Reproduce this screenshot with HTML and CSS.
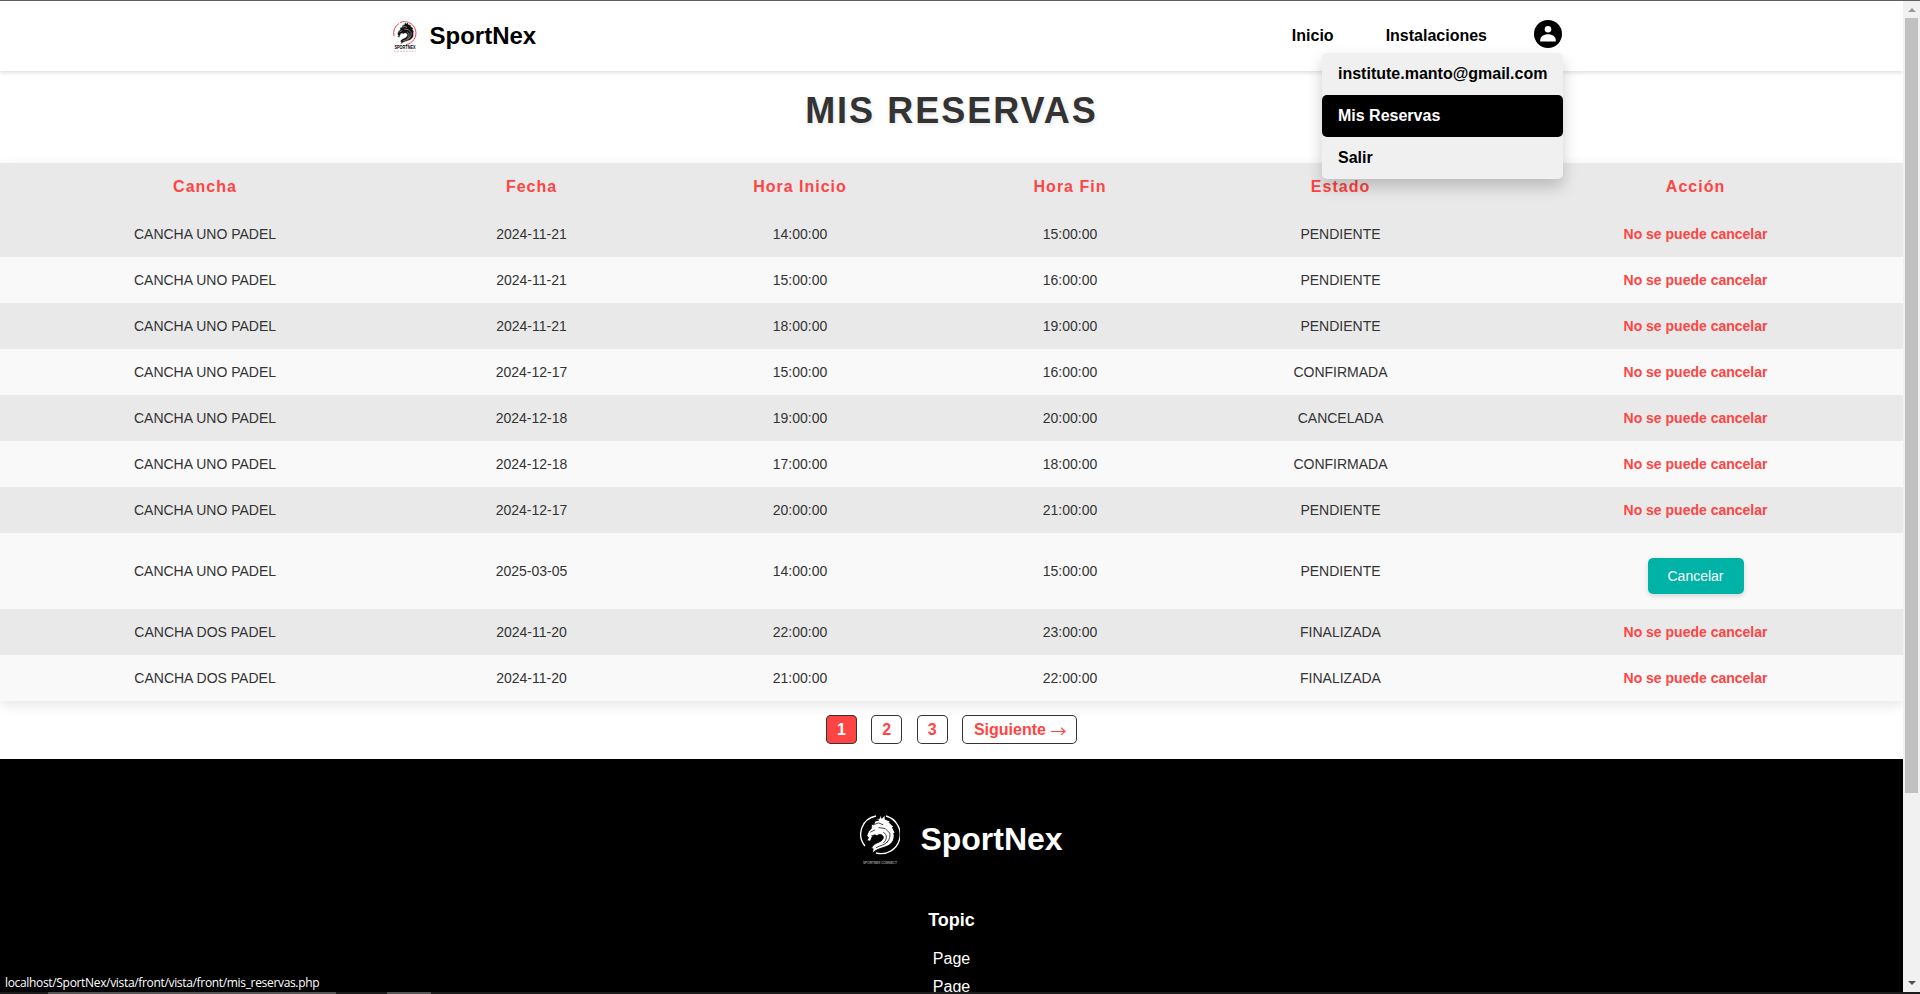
FILE: index.html
```html
<!DOCTYPE html>
<html lang="es">
<head>
<meta charset="utf-8">
<title>SportNex - Mis Reservas</title>
<link rel="stylesheet" href="styles.css">
</head>
<body>
<svg class="defs" width="0" height="0" aria-hidden="true">
  <symbol id="dragon" viewBox="0 0 38 42">
    <path d="M19 0 20.500 4 24 .5 24 5l5.500 2-1 1.500L33 13l-1 1 3 6-1.500 0C35 28 31 33 24 35c-6 2-10 3-14 7l1-5-2 0c1-4 5-6 9-7.500 4-2 5-5 3-7-2-1.500-4-1-6 .5l-2-1-3 2-2 5-4-1 2-3-2-2 2-5 3-3 0-4 3-1 1-3 4-1-4-1 5-1z"/>
    <path class="cut" d="M8 19l5-2.500M11 11l6-2 5 2M17 14l7 1 5 5M22 19c5 3 4 8 0 12M29 20c1 5-1 8-4 11M14 36c5-3 10-3 13-7M9 23l4-1"/>
  </symbol>
</svg>
<div class="window">
  <div class="page">
    <header class="header">
      <div class="brand">
        <svg class="brand-logo" viewBox="0 0 26 34">
          <path class="ring" d="M8 3.500A11.500 11.500 0 1 1 14 25.500M7 4.500A12 12 0 0 0 2 17"/>
          <use class="brand-dragon" href="#dragon" x="3" y="1" width="21" height="26"/>
          <text x="2.500" y="30.300" textLength="21" lengthAdjust="spacingAndGlyphs">SPORTNEX</text>
          <path class="tagline" d="M2 32.200H24"/>
        </svg>
        <span>SportNex</span>
      </div>
      <nav class="nav">
        <a>Inicio</a>
        <a>Instalaciones</a>
        <div class="user">
          <svg class="avatar" viewBox="0 0 28 28">
            <circle cx="14" cy="14" r="14"/>
            <circle class="face" cx="14" cy="9.300" r="3.300"/>
            <path class="face" d="M6.200 21.500v-1c0-4 3.500-6.200 7.800-6.200s7.800 2.200 7.800 6.200v1z"/>
          </svg>
          <div class="menu">
            <a>institute.manto@gmail.com</a>
            <a class="active">Mis Reservas</a>
            <a>Salir</a>
          </div>
        </div>
      </nav>
    </header>
    <h1 class="title">MIS RESERVAS</h1>
    <table class="bookings">
      <colgroup><col class="c1"><col class="c2"><col class="c3"><col class="c4"><col class="c5"><col class="c6"></colgroup>
      <thead><tr><th>Cancha</th><th>Fecha</th><th>Hora Inicio</th><th>Hora Fin</th><th>Estado</th><th>Acción</th></tr></thead>
      <tbody>
        <tr><td>CANCHA UNO PADEL</td><td>2024-11-21</td><td>14:00:00</td><td>15:00:00</td><td>PENDIENTE</td><td class="locked">No se puede cancelar</td></tr>
        <tr><td>CANCHA UNO PADEL</td><td>2024-11-21</td><td>15:00:00</td><td>16:00:00</td><td>PENDIENTE</td><td class="locked">No se puede cancelar</td></tr>
        <tr><td>CANCHA UNO PADEL</td><td>2024-11-21</td><td>18:00:00</td><td>19:00:00</td><td>PENDIENTE</td><td class="locked">No se puede cancelar</td></tr>
        <tr><td>CANCHA UNO PADEL</td><td>2024-12-17</td><td>15:00:00</td><td>16:00:00</td><td>CONFIRMADA</td><td class="locked">No se puede cancelar</td></tr>
        <tr><td>CANCHA UNO PADEL</td><td>2024-12-18</td><td>19:00:00</td><td>20:00:00</td><td>CANCELADA</td><td class="locked">No se puede cancelar</td></tr>
        <tr><td>CANCHA UNO PADEL</td><td>2024-12-18</td><td>17:00:00</td><td>18:00:00</td><td>CONFIRMADA</td><td class="locked">No se puede cancelar</td></tr>
        <tr><td>CANCHA UNO PADEL</td><td>2024-12-17</td><td>20:00:00</td><td>21:00:00</td><td>PENDIENTE</td><td class="locked">No se puede cancelar</td></tr>
        <tr><td>CANCHA UNO PADEL</td><td>2025-03-05</td><td>14:00:00</td><td>15:00:00</td><td>PENDIENTE</td><td><button class="cancel">Cancelar</button></td></tr>
        <tr><td>CANCHA DOS PADEL</td><td>2024-11-20</td><td>22:00:00</td><td>23:00:00</td><td>FINALIZADA</td><td class="locked">No se puede cancelar</td></tr>
        <tr><td>CANCHA DOS PADEL</td><td>2024-11-20</td><td>21:00:00</td><td>22:00:00</td><td>FINALIZADA</td><td class="locked">No se puede cancelar</td></tr>
      </tbody>
    </table>
    <div class="pagination"><a class="current">1</a><a>2</a><a>3</a><a class="next">Siguiente <span class="arrow">→</span></a></div>
    <footer class="footer">
      <div class="footer-brand">
        <svg class="footer-logo" viewBox="0 0 40 54">
          <path class="ring" d="M16 4A18.500 18.500 0 0 0 5 34M26 4A18.500 18.500 0 1 1 16 41"/>
          <use class="footer-dragon" href="#dragon" x="3" y="1" width="35" height="42"/>
          <text x="3" y="52.300" textLength="34" lengthAdjust="spacingAndGlyphs">SPORTNEX CONNECT</text>
        </svg>
        <span>SportNex</span>
      </div>
      <h2>Topic</h2>
      <a>Page</a>
      <a>Page</a>
    </footer>
  </div>
  <div class="scrollbar">
    <i class="up"></i>
    <i class="thumb"></i>
    <i class="down"></i>
  </div>
  <div class="status">localhost/SportNex/vista/front/vista/front/mis_reservas.php</div>
  <div class="taskbar"><i class="task"></i><i class="task small"></i></div>
</div>
</body>
</html>
```

FILE: styles.css
```css
* { box-sizing: border-box; }
body { margin: 0; font-family: "Liberation Sans", Arial, sans-serif; background: #fff; overflow: hidden; }
.defs { position: absolute; }
.window { position: relative; display: flex; height: 994px; overflow: hidden; border-top: 1px solid #606060; }
.page { width: 1903px; height: 993px; overflow: hidden; display: flex; flex-direction: column; }
.page > * { flex-shrink: 0; }

.header { position: relative; z-index: 2; height: 70px; padding: 0 341px 0 391.500px; display: flex; justify-content: space-between; background: #fff; box-shadow: 0 2px 4px rgba(0,0,0,.12); }
.brand { display: flex; align-items: center; gap: 12px; font-size: 24px; font-weight: bold; color: #000; }
.brand-logo { width: 26px; height: 34px; overflow: visible; }
.brand-logo text { font-size: 5px; font-weight: bold; }
.brand-dragon { fill: #111; stroke: #fff; }
.ring { fill: none; stroke: #e84050; stroke-width: 1; }
.tagline { stroke: #eaa; stroke-width: .8; stroke-dasharray: 2 1; }
.cut { fill: none; stroke-width: .8; }
.nav { display: flex; align-items: center; font-size: 16px; font-weight: bold; color: #000; }
.nav > a + a { margin-left: 52px; }
.user { position: relative; margin-left: 47px; height: 28px; margin-top: -4px; }
.avatar { display: block; width: 28px; height: 28px; }
.face { fill: #fff; }
.menu { position: absolute; right: -1px; top: 33px; width: 241px; background: #f0f0f0; border-radius: 5px; box-shadow: 0 8px 16px rgba(0,0,0,.2); }
.menu a { display: block; padding: 12px 16px; line-height: 18px; white-space: nowrap; }
.menu .active { background: #000; color: #fff; border-radius: 5px; }

.title { margin: 18px 0 30px; height: 44px; line-height: 44px; font-size: 36px; letter-spacing: 2px; text-align: center; color: #333; text-shadow: 1px 2px 4px rgba(0,0,0,.1); }

.bookings { width: 1903px; table-layout: fixed; border-collapse: collapse; text-align: center; color: #333; box-shadow: 0 4px 12px rgba(0,0,0,.1); }
.c1 { width: 409px; }
.c2 { width: 244px; }
.c3 { width: 293px; }
.c4 { width: 247px; }
.c5 { width: 294px; }
.c6 { width: 416px; }
th { padding: 15px 0 15px 1px; font-size: 16px; line-height: 18px; letter-spacing: 1px; color: #f44; background: #e9e9e9; }
td { padding: 15px 0 15px 1px; font-size: 14px; line-height: 16px; }
tbody tr { background: #f9f9f9; }
tbody tr:nth-child(odd) { background: #e9e9e9; }
.locked { color: #f44; font-weight: bold; }
.cancel { display: block; margin: 10px auto 0; width: 96px; height: 36px; padding: 0; border: 0; border-radius: 5px; font: 14px "Liberation Sans", Arial, sans-serif; color: #fff; background: #00b3a6; box-shadow: 0 2px 5px rgba(0,0,0,.15); }

.pagination { height: 58px; padding-top: 14px; display: flex; justify-content: center; gap: 14.400px; font-size: 16px; font-weight: bold; color: #f44; }
.pagination a { height: 29px; padding: 0 11px; line-height: 30px; border-radius: 5px; box-shadow: inset 0 0 0 1px #333; }
.pagination .current { color: #fff; background: #f44; }
.pagination .next { width: 115px; padding: 0 0 0 12px; display: flex; white-space: pre; }
.arrow { font-family: "Noto Sans CJK JP", sans-serif; font-weight: normal; }

.footer { flex: 1; padding-top: 52px; display: flex; flex-direction: column; align-items: center; color: #fff; background: #000; }
.footer-brand { display: flex; align-items: center; gap: 20px; height: 56px; margin-left: 20px; font-size: 32px; font-weight: bold; }
.footer-logo { width: 40px; height: 54px; }
.footer .ring { stroke: #fff; stroke-width: 1.300; }
.footer-dragon { fill: #fff; stroke: #000; }
.footer-logo text { font-size: 3.500px; fill: #999; }
.footer h2 { margin: 43px 0 20px; font-size: 18px; line-height: 20px; }
.footer a { font-size: 16px; line-height: 18px; margin-bottom: 10px; }

.scrollbar { width: 17px; background: #f1f1f1; display: flex; flex-direction: column; align-items: center; padding-top: 7px; }
.up, .down { border: 4px solid transparent; border-top: 0; border-bottom-color: #999; height: 4px; }
.thumb { width: 13px; height: 775px; margin-top: 6px; background: #c1c1c1; }
.down { border: 4px solid transparent; border-bottom: 0; border-top-color: #505050; margin-top: 188px; }
.status { position: absolute; left: 0; bottom: 1px; padding: 0 5px; font: 12px/20px "Open Sans", "Noto Sans", sans-serif; letter-spacing: -.33px; color: #fff; background: #000; white-space: nowrap; }
.taskbar { position: absolute; left: 0; right: 0; bottom: 0; height: 2px; padding-left: 48px; display: flex; gap: 51px; background: #1c1c1c; }
.task { width: 288px; background: #555; }
.task.small { width: 44px; }
```
